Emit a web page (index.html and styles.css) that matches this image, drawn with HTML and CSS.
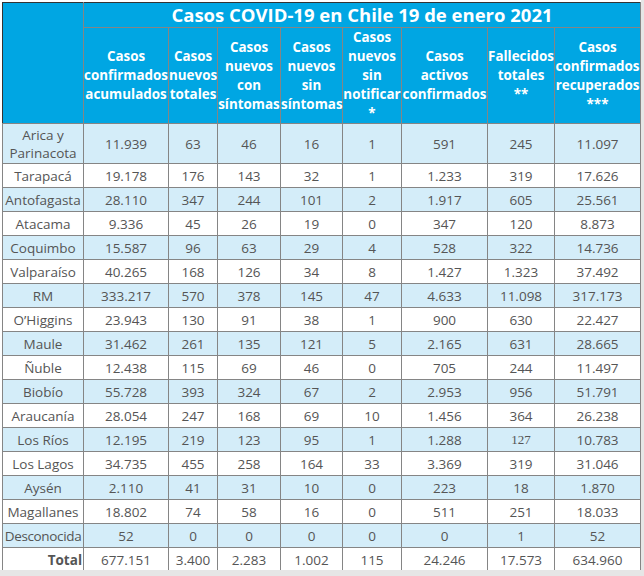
FILE: index.html
```html
<!DOCTYPE html>
<html lang="es">
<head>
<meta charset="utf-8">
<title>Casos COVID-19 en Chile</title>
<link rel="stylesheet" href="styles.css">
</head>
<body>
<div class="frame">
<table class="covid">
<colgroup>
<col class="c-region"><col class="c-acum"><col class="c-nuevos"><col class="c-con"><col class="c-sin"><col class="c-notif"><col class="c-activos"><col class="c-fall"><col class="c-recup">
</colgroup>
<thead>
<tr class="title-row">
<th rowspan="2" class="blank"></th>
<th colspan="8" class="title">Casos COVID-19 en Chile 19 de enero 2021</th>
</tr>
<tr class="head-row">
<th>Casos confirmados acumulados</th>
<th>Casos nuevos totales</th>
<th>Casos nuevos con síntomas</th>
<th>Casos nuevos sin síntomas</th>
<th>Casos nuevos sin notificar *</th>
<th>Casos activos confirmados</th>
<th>Fallecidos totales<br>**</th>
<th>Casos confirmados recuperados ***</th>
</tr>
</thead>
<tbody>
<tr class="alt tall"><td>Arica y Parinacota</td><td>11.939</td><td>63</td><td>46</td><td>16</td><td>1</td><td>591</td><td>245</td><td>11.097</td></tr>
<tr><td>Tarapacá</td><td>19.178</td><td>176</td><td>143</td><td>32</td><td>1</td><td>1.233</td><td>319</td><td>17.626</td></tr>
<tr class="alt"><td>Antofagasta</td><td>28.110</td><td>347</td><td>244</td><td>101</td><td>2</td><td>1.917</td><td>605</td><td>25.561</td></tr>
<tr><td>Atacama</td><td>9.336</td><td>45</td><td>26</td><td>19</td><td>0</td><td>347</td><td>120</td><td>8.873</td></tr>
<tr class="alt"><td>Coquimbo</td><td>15.587</td><td>96</td><td>63</td><td>29</td><td>4</td><td>528</td><td>322</td><td>14.736</td></tr>
<tr><td>Valparaíso</td><td>40.265</td><td>168</td><td>126</td><td>34</td><td>8</td><td>1.427</td><td>1.323</td><td>37.492</td></tr>
<tr class="alt"><td>RM</td><td>333.217</td><td>570</td><td>378</td><td>145</td><td>47</td><td>4.633</td><td>11.098</td><td>317.173</td></tr>
<tr><td>O’Higgins</td><td>23.943</td><td>130</td><td>91</td><td>38</td><td>1</td><td>900</td><td>630</td><td>22.427</td></tr>
<tr class="alt"><td>Maule</td><td>31.462</td><td>261</td><td>135</td><td>121</td><td>5</td><td>2.165</td><td>631</td><td>28.665</td></tr>
<tr><td>Ñuble</td><td>12.438</td><td>115</td><td>69</td><td>46</td><td>0</td><td>705</td><td>244</td><td>11.497</td></tr>
<tr class="alt"><td>Biobío</td><td>55.728</td><td>393</td><td>324</td><td>67</td><td>2</td><td>2.953</td><td>956</td><td>51.791</td></tr>
<tr><td>Araucanía</td><td>28.054</td><td>247</td><td>168</td><td>69</td><td>10</td><td>1.456</td><td>364</td><td>26.238</td></tr>
<tr class="alt"><td>Los Ríos</td><td>12.195</td><td>219</td><td>123</td><td>95</td><td>1</td><td>1.288</td><td class="serif">127</td><td>10.783</td></tr>
<tr><td>Los Lagos</td><td>34.735</td><td>455</td><td>258</td><td>164</td><td>33</td><td>3.369</td><td>319</td><td>31.046</td></tr>
<tr class="alt"><td>Aysén</td><td>2.110</td><td>41</td><td>31</td><td>10</td><td>0</td><td>223</td><td>18</td><td>1.870</td></tr>
<tr><td>Magallanes</td><td>18.802</td><td>74</td><td>58</td><td>16</td><td>0</td><td>511</td><td>251</td><td>18.033</td></tr>
<tr class="alt"><td class="tight">Desconocida</td><td>52</td><td>0</td><td>0</td><td>0</td><td>0</td><td>0</td><td>1</td><td>52</td></tr>
<tr class="total"><td>Total</td><td>677.151</td><td>3.400</td><td>2.283</td><td>1.002</td><td>115</td><td>24.246</td><td>17.573</td><td>634.960</td></tr>
</tbody>
</table>
</div>
</body>
</html>
```

FILE: styles.css
```css
html, body {
  margin: 0;
  padding: 0;
  background: #e6e6e6;
}
.frame {
  width: 639px;
  height: 568px;
  padding: 2px 0 0 2px;
  background: #ffffff;
}
.covid {
  table-layout: fixed;
  width: 639px;
  border-collapse: collapse;
  border: 1px solid #333333;
  font-family: "Open Sans", "Liberation Sans", sans-serif;
  font-size: 13.5px;
  color: #555555;
}
.c-region { width: 81px; }
.c-acum { width: 85px; }
.c-nuevos { width: 49px; }
.c-con { width: 63px; }
.c-sin { width: 62px; }
.c-notif { width: 59px; }
.c-activos { width: 86px; }
.c-fall { width: 67px; }
.c-recup { width: 86px; }

.covid th {
  background: #00a6e3;
  color: #ffffff;
  font-weight: 700;
  border: 1px solid #858585;
  padding: 0;
  text-align: center;
  vertical-align: middle;
}
.covid th.blank {
  border-color: #333333 #858585 #858585 #333333;
}
.title-row th.title {
  font-size: 18.5px;
  line-height: 24px;
  border-top-color: #333333;
}
.head-row th {
  font-size: 13.4px;
  line-height: 19px;
  padding: 0;
}
.covid td {
  border: 1px solid #858585;
  text-align: center;
  vertical-align: middle;
  line-height: 18px;
  padding: 1px 0;
  height: 21px;
  white-space: nowrap;
}
.covid td.tight {
  letter-spacing: -0.35px;
}
.covid tr.tall td {
  white-space: normal;
  height: 37px;
}
.covid tr.alt td {
  background: #d4edf9;
}
.covid tr.total td:first-child {
  font-weight: 700;
  text-align: right;
  padding-right: 1px;
}
.covid td.serif {
  font-family: "Liberation Serif", "DejaVu Serif", serif;
  font-size: 13px;
}
```
